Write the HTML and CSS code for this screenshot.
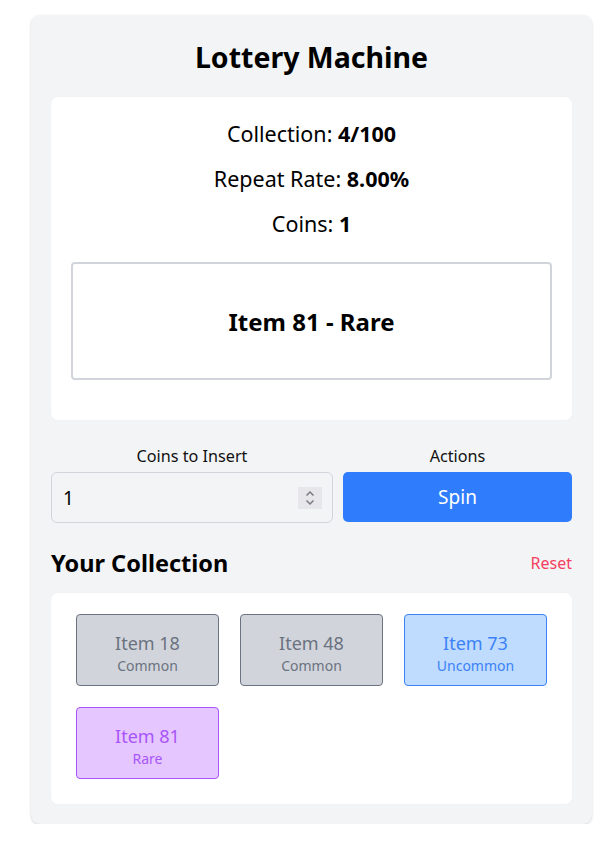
FILE: index.html
```html
<!DOCTYPE html>
<html lang="en">
<head>
<meta charset="utf-8">
<title>Lottery Machine</title>
<link rel="stylesheet" href="styles.css">
</head>
<body>
<main class="machine">
  <h1 class="title">Lottery Machine</h1>
  <section class="panel stats">
    <p class="stat">Collection: <b>4/100</b></p>
    <p class="stat">Repeat Rate: <b>8.00%</b></p>
    <p class="stat">Coins: <b>1</b></p>
    <div class="result">Item 81 - Rare</div>
  </section>
  <section class="controls">
    <div class="control">
      <label class="control-label" for="coins">Coins to Insert</label>
      <div class="input-box">
        <input id="coins" class="coin-input" type="text" value="1">
        <span class="spinner">
          <svg width="24" height="22" viewBox="0 0 24 22"><path d="M8.5 8.5 L12 5 L15.5 8.5" fill="none" stroke="#7b7b85" stroke-width="1.5"/><path d="M8.5 13.5 L12 17 L15.5 13.5" fill="none" stroke="#7b7b85" stroke-width="1.5"/></svg>
        </span>
      </div>
    </div>
    <div class="control">
      <span class="control-label">Actions</span>
      <button class="spin-btn">Spin</button>
    </div>
  </section>
  <div class="collection-head">
    <h2 class="subtitle">Your Collection</h2>
    <button class="reset-btn">Reset</button>
  </div>
  <section class="panel items">
    <div class="item common"><span class="item-name">Item 18</span><span class="item-rarity">Common</span></div>
    <div class="item common"><span class="item-name">Item 48</span><span class="item-rarity">Common</span></div>
    <div class="item uncommon"><span class="item-name">Item 73</span><span class="item-rarity">Uncommon</span></div>
    <div class="item rare"><span class="item-name">Item 81</span><span class="item-rarity">Rare</span></div>
  </section>
</main>
</body>
</html>
```

FILE: styles.css
```css
* { box-sizing: border-box; }
html, body { margin: 0; padding: 0; background: #ffffff; }
body {
  font-family: "Noto Sans", "Open Sans", sans-serif;
  color: #000;
  padding: 15px 24px 0 31px;
}
.machine {
  width: 561px;
  background: #f3f4f6;
  border-radius: 9px;
  box-shadow: 0 1px 3px rgba(0,0,0,0.12), 0 1px 2px rgba(0,0,0,0.06);
  padding: 20px 20px 20px 20px;
}
.title {
  margin: 0;
  text-align: center;
  font-size: 28.5px;
  line-height: 44px;
  font-weight: 700;
  height: 44px;
  margin-bottom: 18px;
}
.panel {
  background: #fff;
  border-radius: 7px;
  box-shadow: 0 0 2px rgba(0,0,0,0.04);
}
.stats {
  padding: 20px 20px 40px;
  display: flex;
  flex-direction: column;
  align-items: stretch;
}
.stat {
  margin: 0 0 12px;
  text-align: center;
  font-size: 21.5px;
  line-height: 33px;
}
.stat:nth-of-type(3) { margin-bottom: 22px; }
.stat b { font-weight: 700; }
.result {
  height: 118px;
  border: 2px solid #d1d5db;
  border-radius: 4px;
  display: flex;
  align-items: center;
  justify-content: center;
  font-size: 24px;
  font-weight: 700;
}
.controls {
  display: grid;
  grid-template-columns: 282px 1fr;
  column-gap: 10px;
  margin-top: 24px;
}
.control {
  display: flex;
  flex-direction: column;
  gap: 4px;
}
.control-label {
  text-align: center;
  font-size: 16.2px;
  line-height: 24px;
  color: #111;
}
.input-box {
  height: 51px;
  border: 1px solid #d1d5db;
  border-radius: 6px;
  display: flex;
  align-items: center;
  padding: 0 10px 0 11px;
}
.coin-input {
  flex: 1;
  min-width: 0;
  border: 0;
  background: transparent;
  font: inherit;
  font-size: 19px;
  color: #000;
  outline: none;
  padding: 0;
}
.spinner {
  width: 24px;
  height: 22px;
  background: #e6e6eb;
  display: flex;
}
.spin-btn {
  height: 50px;
  border: 0;
  border-radius: 5px;
  background: #2f7dfd;
  color: #fff;
  font-family: inherit;
  font-size: 19px;
  cursor: pointer;
}
.collection-head {
  display: flex;
  justify-content: space-between;
  align-items: center;
  margin-top: 24px;
  height: 32px;
  margin-bottom: 14px;
}
.subtitle {
  margin: 0;
  font-size: 23.5px;
  font-weight: 700;
}
.reset-btn {
  border: 0;
  background: transparent;
  color: #f43f5e;
  font-family: inherit;
  font-size: 16px;
  padding: 0;
}
.items {
  display: grid;
  grid-template-columns: repeat(3, 143px);
  column-gap: 21px;
  row-gap: 21px;
  padding: 21px 24px 25px 25px;
}
.item {
  height: 72px;
  border: 1px solid;
  border-radius: 4px;
  display: flex;
  flex-direction: column;
  align-items: center;
  justify-content: center;
  padding-top: 5px;
}
.item-name { font-size: 18px; line-height: 26px; }
.item-rarity { font-size: 14px; line-height: 20px; }
.common { background: #d1d5db; border-color: #6b7280; color: #6b7280; }
.uncommon { background: #bfdbfe; border-color: #3b82f6; color: #3b82f6; }
.rare { background: #e6c6ff; border-color: #a855f7; color: #a855f7; }
```
